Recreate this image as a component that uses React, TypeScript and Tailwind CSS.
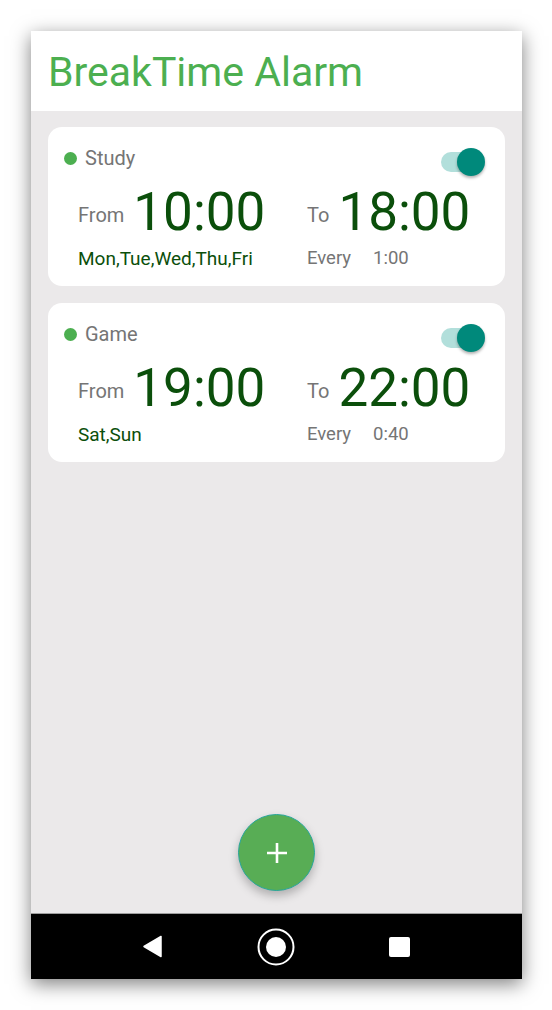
import React from "react";

function Toggle() {
  return (
    <div className="relative w-[40px] h-[28px] flex items-center">
      <div className="w-[40px] h-[20px] rounded-full bg-[#b2dfdb]" />
      <div className="absolute left-[16px] top-[0px] w-[28px] h-[28px] rounded-full bg-[#00897b] shadow-[0_2px_3px_rgba(0,0,0,0.3)]" />
    </div>
  );
}

function Card(props: { name: string; from: string; to: string; days: string; every: string }) {
  return (
    <div className="bg-white rounded-[14px] h-[159px] pl-[16px] pr-[24px] pt-[20px]">
      <div className="flex items-start justify-between h-[26px]">
        <div className="flex items-center gap-[8px] h-[22px]">
          <div className="w-[13px] h-[13px] rounded-full bg-[#4caf50]" />
          <span className="text-[20px] text-[#757575] leading-none">{props.name}</span>
        </div>
        <div className="mt-[1px]">
          <Toggle />
        </div>
      </div>
      <div className="grid grid-cols-[229px_1fr] pl-[14px] mt-[10px]">
        <div className="flex items-center gap-[9px] h-[58px]">
          <span className="text-[20px] text-[#757575] mt-[5px]">From</span>
          <span className="text-[53px] leading-[58px] text-[#0b4f0b]">{props.from}</span>
        </div>
        <div className="flex items-center gap-[9px] h-[58px]">
          <span className="text-[20px] text-[#757575] mt-[5px]">To</span>
          <span className="text-[53px] leading-[58px] text-[#0b4f0b]">{props.to}</span>
        </div>
        <div className="text-[19px] text-[#0b4f0b] mt-[4px]">{props.days}</div>
        <div className="text-[18.5px] text-[#757575] mt-[4px] flex">
          <span className="w-[66px]">Every</span>
          <span>{props.every}</span>
        </div>
      </div>
    </div>
  );
}

export default function App() {
  return (
    <div
      className="w-[552px] h-[1010px] bg-white pt-[31px] pl-[31px]"
      style={{ fontFamily: "Roboto, 'Noto Sans', sans-serif" }}
    >
      <div className="w-[491px] h-[948px] flex flex-col shadow-[0_5px_18px_rgba(0,0,0,0.5)]">
        <div className="h-[80px] bg-white flex items-center pl-[17px]">
          <h1 className="text-[41px] text-[#4caf50] leading-none mt-[2px]">BreakTime Alarm</h1>
        </div>
        <div className="flex-1 bg-[#ebe9ea] flex flex-col px-[17px] pt-[16px]">
          <div className="flex flex-col gap-[17px]">
            <Card name="Study" from="10:00" to="18:00" days="Mon,Tue,Wed,Thu,Fri" every="1:00" />
            <Card name="Game" from="19:00" to="22:00" days="Sat,Sun" every="0:40" />
          </div>
          <div className="mt-auto mb-[22px] flex justify-center">
            <button className="w-[77px] h-[77px] rounded-full bg-[#58ad55] border border-[#26a69a] flex items-center justify-center shadow-[0_5px_10px_rgba(0,0,0,0.25)]">
              <svg width="22" height="22" viewBox="0 0 22 22">
                <path d="M11 1v20M1 11h20" stroke="white" strokeWidth="2.6" />
              </svg>
            </button>
          </div>
        </div>
        <div className="h-[66px] bg-black border-t border-[#9e9e9e] flex items-center justify-between pl-[111px] pr-[112px]">
          <svg width="21" height="23" viewBox="0 0 21 23">
            <path d="M19 1.5 L19 21.5 L2 11.5 Z" fill="white" stroke="white" strokeWidth="1.5" strokeLinejoin="round" />
          </svg>
          <svg width="40" height="40" viewBox="0 0 40 40">
            <circle cx="20" cy="20" r="17.5" fill="none" stroke="white" strokeWidth="2" />
            <circle cx="20" cy="20" r="10" fill="white" />
          </svg>
          <div className="w-[21px] h-[20px] bg-white rounded-[2px]" />
        </div>
      </div>
    </div>
  );
}
